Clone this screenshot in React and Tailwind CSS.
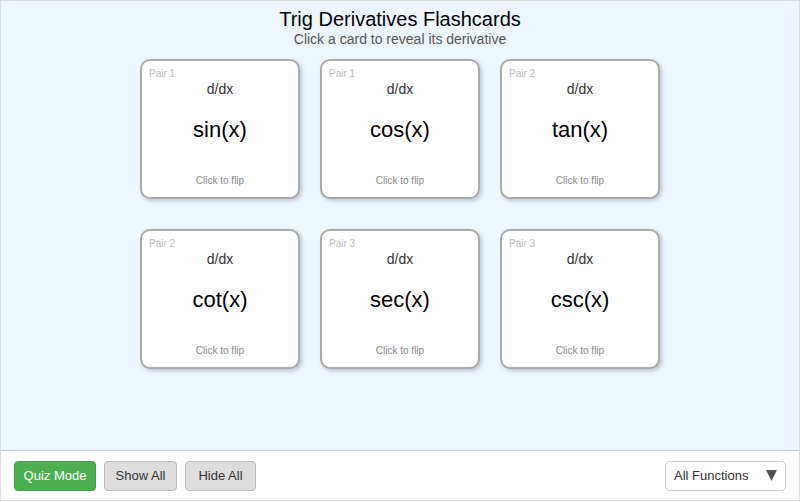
import React, { useState } from "react";

const cards = [
  { fn: "sin(x)", pair: 1, d: "cos(x)" },
  { fn: "cos(x)", pair: 1, d: "-sin(x)" },
  { fn: "tan(x)", pair: 2, d: "sec²(x)" },
  { fn: "cot(x)", pair: 2, d: "-csc²(x)" },
  { fn: "sec(x)", pair: 3, d: "sec(x)tan(x)" },
  { fn: "csc(x)", pair: 3, d: "-csc(x)cot(x)" },
];

function Card({ card }) {
  const [flipped, setFlipped] = useState(false);
  return (
    <div
      onClick={() => setFlipped((f) => !f)}
      className="relative h-[140px] w-[160px] cursor-pointer rounded-[10px] border-2 border-[#aaa] bg-white shadow-[2px_2px_4px_rgba(0,0,0,0.2)] flex flex-col items-center"
    >
      <span className="absolute left-[7px] top-[5px] text-[10px] text-[#bbb]">
        Pair {card.pair}
      </span>
      <div className="mt-[19px] text-[14px] leading-[18px] text-[#333]">d/dx</div>
      <div className="mt-[18px] text-[22px] leading-[28px] text-black">
        {flipped ? card.d : card.fn}
      </div>
      <div className="mt-[30px] text-[10px] leading-[14px] text-[#888]">
        Click to flip
      </div>
    </div>
  );
}

export default function App() {
  return (
    <div
      className="flex h-[501px] w-[800px] flex-col border border-[#ddd]"
      style={{ fontFamily: '"Liberation Sans", Arial, sans-serif' }}
    >
      <div className="flex flex-1 flex-col items-center bg-[#eef6ff]">
        <h1 className="mt-[6px] text-[20px] leading-[24px] text-black">
          Trig Derivatives Flashcards
        </h1>
        <p className="text-[14px] leading-[16px] text-[#555]">
          Click a card to reveal its derivative
        </p>
        <div className="mt-[12px] grid grid-cols-[160px_160px_160px] gap-x-[20px] gap-y-[30px]">
          {cards.map((c) => (
            <Card key={c.fn} card={c} />
          ))}
        </div>
      </div>
      <div className="flex h-[50px] items-center border-t border-[#ccc] bg-white px-[13px]">
        <div className="flex gap-[8px] text-[13px]">
          <button className="h-[30px] w-[82px] rounded-[4px] border border-[#43a047] bg-[#4caf50] text-white">
            Quiz Mode
          </button>
          <button className="h-[30px] w-[73px] rounded-[4px] border border-[#bbb] bg-[#ddd] text-[#333]">
            Show All
          </button>
          <button className="h-[30px] w-[71px] rounded-[4px] border border-[#bbb] bg-[#ddd] text-[#333]">
            Hide All
          </button>
        </div>
        <div className="ml-auto flex h-[30px] w-[121px] items-center justify-between rounded-[5px] border border-[#ccc] bg-white pl-[8px] pr-[8px] text-[13px] text-[#333]">
          <span>All Functions</span>
          <svg width="11" height="11" viewBox="0 0 11 11">
            <path d="M0 0 H11 L5.5 11 Z" fill="#555" />
          </svg>
        </div>
      </div>
    </div>
  );
}
